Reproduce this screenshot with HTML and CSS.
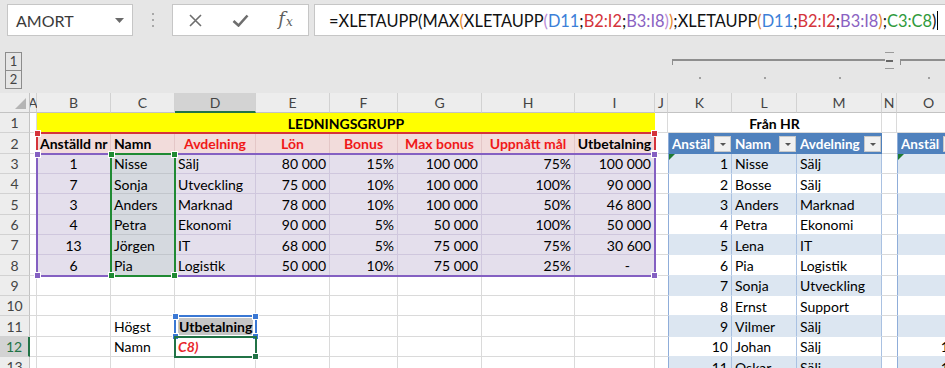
FILE: index.html
```
<!DOCTYPE html>
<html lang="sv">
<head>
    <meta charset="UTF-8">
    <title>XLETAUPP</title>
    <link rel="stylesheet" href="styles.css">
</head>
<body>
    <div class="topbar">
        <div class="namebox">
            <span>AMORT</span>
            <svg width="9" height="5" viewBox="0 0 9 5"><path d="M0 0h9L4.5 5z" fill="#6a6a6a"/></svg>
        </div>
        <div class="grip"><i></i><i></i><i></i></div>
        <div class="fxbtns">
            <span><svg width="13" height="13" viewBox="0 0 13 13"><path d="M1 1l11 11M12 1L1 12" stroke="#6e6e6e" stroke-width="1.6"/></svg></span>
            <span><svg width="17" height="13" viewBox="0 0 17 13"><path d="M1.5 7l5 4.5L15.5 1.5" stroke="#6e6e6e" stroke-width="2.6" fill="none"/></svg></span>
            <span class="fx">f<sub>x</sub></span>
        </div>
        <div class="formula">=XLETAUPP(MAX<b class="f-o">(</b>XLETAUPP<b class="f-l">(</b><b class="f-bl">D11</b>;<b class="f-rd">B2:I2</b>;<b class="f-pu">B3:I8</b><b class="f-l">)</b><b class="f-o">)</b>;XLETAUPP<b class="f-o">(</b><b class="f-bl">D11</b>;<b class="f-rd">B2:I2</b>;<b class="f-pu">B3:I8</b><b class="f-o">)</b>;<b class="f-gr">C3:C8</b>)<span class="caret"></span></div>
    </div>

    <div class="outline">
        <div class="levels"><span>1</span><span>2</span></div>
        <div class="bracket b-km"></div>
        <div class="minus"><i></i></div>
        <div class="bracket b-o"></div>
        <i class="dot" style="grid-column: 12"></i>
        <i class="dot" style="grid-column: 13"></i>
        <i class="dot" style="grid-column: 14"></i>
        <i class="dot" style="grid-column: 16"></i>
    </div>

    <div class="sheet">
        <!-- column headers -->
        <div class="corner"><i></i></div>
        <div class="ch col-a">A</div><div class="ch">B</div><div class="ch">C</div><div class="ch act">D</div>
        <div class="ch">E</div><div class="ch">F</div><div class="ch">G</div><div class="ch">H</div>
        <div class="ch">I</div><div class="ch">J</div><div class="ch">K</div><div class="ch">L</div>
        <div class="ch">M</div><div class="ch">N</div><div class="ch">O</div>

        <!-- 1 -->
        <div class="rh">1</div><div class="c"></div>
        <div class="c title">LEDNINGSGRUPP</div>
        <div class="c"></div>
        <div class="c hr-title">Från HR</div>
        <div class="c"></div><div class="c"></div>

        <!-- 2 -->
        <div class="rh">2</div><div class="c"></div>
        <div class="c hd">Anställd nr</div><div class="c hd">Namn</div>
        <div class="c hd ctr red">Avdelning</div><div class="c hd ctr red">Lön</div>
        <div class="c hd ctr red">Bonus</div><div class="c hd ctr red">Max bonus</div>
        <div class="c hd ctr red">Uppnått mål</div><div class="c hd ctr">Utbetalning</div>
        <div class="c gap"></div>
        <div class="c th first"><span>Anställd nr</span><i class="dd"></i></div>
        <div class="c th"><span>Namn</span><i class="dd"></i></div>
        <div class="c th"><span>Avdelning</span><i class="dd"></i></div>
        <div class="c gap"></div>
        <div class="c th first"><span>Anställd nr</span><i class="dd"></i></div>

        <!-- 3 -->
        <div class="rh">3</div><div class="c"></div>
        <div class="c pu ctr">1</div><div class="c pu sel">Nisse</div><div class="c pu">Sälj</div>
        <div class="c pu num">80 000</div><div class="c pu num">15%</div><div class="c pu num">100 000</div>
        <div class="c pu num">75%</div><div class="c pu num">100 000</div>
        <div class="c gap"></div>
        <div class="c t band first num tri">1</div><div class="c t band">Nisse</div><div class="c t band">Sälj</div>
        <div class="c gap"></div><div class="c t band first tri"></div>

        <!-- 4 -->
        <div class="rh">4</div><div class="c"></div>
        <div class="c pu ctr">7</div><div class="c pu sel">Sonja</div><div class="c pu">Utveckling</div>
        <div class="c pu num">75 000</div><div class="c pu num">10%</div><div class="c pu num">100 000</div>
        <div class="c pu num">100%</div><div class="c pu num">90 000</div>
        <div class="c gap"></div>
        <div class="c t first num">2</div><div class="c t">Bosse</div><div class="c t">Sälj</div>
        <div class="c gap"></div><div class="c t first"></div>

        <!-- 5 -->
        <div class="rh">5</div><div class="c"></div>
        <div class="c pu ctr">3</div><div class="c pu sel">Anders</div><div class="c pu">Marknad</div>
        <div class="c pu num">78 000</div><div class="c pu num">10%</div><div class="c pu num">100 000</div>
        <div class="c pu num">50%</div><div class="c pu num">46 800</div>
        <div class="c gap"></div>
        <div class="c t band first num">3</div><div class="c t band">Anders</div><div class="c t band">Marknad</div>
        <div class="c gap"></div><div class="c t band first"></div>

        <!-- 6 -->
        <div class="rh">6</div><div class="c"></div>
        <div class="c pu ctr">4</div><div class="c pu sel">Petra</div><div class="c pu">Ekonomi</div>
        <div class="c pu num">90 000</div><div class="c pu num">5%</div><div class="c pu num">50 000</div>
        <div class="c pu num">100%</div><div class="c pu num">50 000</div>
        <div class="c gap"></div>
        <div class="c t first num">4</div><div class="c t">Petra</div><div class="c t">Ekonomi</div>
        <div class="c gap"></div><div class="c t first"></div>

        <!-- 7 -->
        <div class="rh">7</div><div class="c"></div>
        <div class="c pu ctr">13</div><div class="c pu sel">Jörgen</div><div class="c pu">IT</div>
        <div class="c pu num">68 000</div><div class="c pu num">5%</div><div class="c pu num">75 000</div>
        <div class="c pu num">75%</div><div class="c pu num">30 600</div>
        <div class="c gap"></div>
        <div class="c t band first num">5</div><div class="c t band">Lena</div><div class="c t band">IT</div>
        <div class="c gap"></div><div class="c t band first"></div>

        <!-- 8 -->
        <div class="rh">8</div><div class="c"></div>
        <div class="c pu ctr">6</div><div class="c pu sel">Pia</div><div class="c pu">Logistik</div>
        <div class="c pu num">50 000</div><div class="c pu num">10%</div><div class="c pu num">75 000</div>
        <div class="c pu num">25%</div><div class="c pu num dash">-</div>
        <div class="c gap"></div>
        <div class="c t first num">6</div><div class="c t">Pia</div><div class="c t">Logistik</div>
        <div class="c gap"></div><div class="c t first"></div>

        <!-- 9 -->
        <div class="rh">9</div><div class="c"></div>
        <div class="c"></div><div class="c"></div><div class="c"></div><div class="c"></div>
        <div class="c"></div><div class="c"></div><div class="c"></div><div class="c"></div>
        <div class="c gap"></div>
        <div class="c t band first num">7</div><div class="c t band">Sonja</div><div class="c t band">Utveckling</div>
        <div class="c gap"></div><div class="c t band first"></div>

        <!-- 10 -->
        <div class="rh">10</div><div class="c"></div>
        <div class="c"></div><div class="c"></div><div class="c"></div><div class="c"></div>
        <div class="c"></div><div class="c"></div><div class="c"></div><div class="c"></div>
        <div class="c gap"></div>
        <div class="c t first num">8</div><div class="c t">Ernst</div><div class="c t">Support</div>
        <div class="c gap"></div><div class="c t first"></div>

        <!-- 11 -->
        <div class="rh">11</div><div class="c"></div>
        <div class="c"></div><div class="c">Högst</div><div class="c"><span class="hl">Utbetalning</span></div><div class="c"></div>
        <div class="c"></div><div class="c"></div><div class="c"></div><div class="c"></div>
        <div class="c gap"></div>
        <div class="c t band first num">9</div><div class="c t band">Vilmer</div><div class="c t band">Sälj</div>
        <div class="c gap"></div><div class="c t band first"></div>

        <!-- 12 -->
        <div class="rh act">12</div><div class="c"></div>
        <div class="c"></div><div class="c">Namn</div><div class="c edit">C8)</div><div class="c"></div>
        <div class="c"></div><div class="c"></div><div class="c"></div><div class="c"></div>
        <div class="c gap"></div>
        <div class="c t first num">10</div><div class="c t">Johan</div><div class="c t">Sälj</div>
        <div class="c gap"></div><div class="c t first num">10</div>

        <!-- 13 -->
        <div class="rh">13</div><div class="c"></div>
        <div class="c"></div><div class="c"></div><div class="c"></div><div class="c"></div>
        <div class="c"></div><div class="c"></div><div class="c"></div><div class="c"></div>
        <div class="c gap"></div>
        <div class="c t band first num">11</div><div class="c t band">Oskar</div><div class="c t band">Sälj</div>
        <div class="c gap"></div><div class="c t band first num">11</div>

        <!-- range finder marks over the cells -->
        <div class="marks">
            <div class="rng red-rng"><i class="tl"></i><i class="tr"></i><i class="bl"></i><i class="br"></i></div>
            <div class="rng pu-rng"><i class="tl"></i><i class="tr"></i><i class="bl"></i><i class="br"></i></div>
            <div class="rng gr-rng"><i class="tl"></i><i class="tr"></i><i class="bl"></i><i class="br"></i></div>
            <div class="rng bl-rng"><i class="tl"></i><i class="tr"></i><i class="bl"></i><i class="br"></i></div>
            <div class="active"><i class="br"></i></div>
        </div>
    </div>
</body>
</html>
```

FILE: styles.css
```
* {
    margin: 0;
    padding: 0;
    box-sizing: border-box;
}

body {
    width: 945px;
    height: 368px;
    overflow: hidden;
    background: #e6e6e6;
    font-family: Lato, 'Liberation Sans', sans-serif;
    color: #000;
}

/* formula bar */
.topbar {
    height: 40px;
    display: flex;
    align-items: center;
    padding-left: 7px;
    white-space: nowrap;
}

.namebox {
    flex: none;
    width: 126px;
    height: 32px;
    background: #fff;
    border: 1px solid #c6c6c6;
    display: flex;
    align-items: center;
    justify-content: space-between;
    padding: 0 8px 0 8px;
    font-size: 16px;
    color: #3a3a3a;
}

.grip {
    flex: none;
    width: 39px;
    display: flex;
    flex-direction: column;
    align-items: center;
    gap: 4px;
}

.grip i {
    width: 2px;
    height: 2px;
    background: #a8a8a8;
}

.fxbtns {
    flex: none;
    width: 137px;
    height: 32px;
    background: #fff;
    border: 1px solid #c6c6c6;
    display: flex;
    align-items: center;
}

.fxbtns span {
    flex: 1;
    display: flex;
    justify-content: center;
    align-items: center;
}

.fx {
    font-family: 'DejaVu Serif', serif;
    font-style: italic;
    font-size: 18px;
    color: #5f5f5f;
    padding-bottom: 4px;
}

.fx sub {
    font-size: 12px;
    position: relative;
    top: 4px;
    margin-left: 1px;
}

.formula {
    margin-left: 5px;
    flex: none;
    width: 640px;
    height: 32px;
    background: #fff;
    border: 1px solid #c6c6c6;
    padding-left: 14px;
    display: flex;
    align-items: center;
    font-size: 16.4px;
    color: #111;
}

.formula b { font-weight: normal; }
.f-o { color: #e5862c; }
.f-l { color: #b98ad6; }
.f-bl { color: #3c7fd8; }
.f-rd { color: #d4343b; }
.f-pu { color: #8a62c2; }
.f-gr { color: #2f9a3c; }

.caret {
    width: 1px;
    height: 19px;
    background: #000;
    margin-left: 1px;
}

/* shared column layout */
.outline, .sheet {
    display: grid;
    grid-template-columns: 30px 7px 74px 64px 81px 74px 68px 84px 93px 80px 13px 64px 65px 85px 15px 64px;
}

/* grouping area */
.outline {
    height: 53px;
    grid-template-rows: 53px;
}

.levels {
    grid-column: 1;
    grid-row: 1;
    margin: 12px 0 0 5px;
    width: 17px;
    align-self: start;
}

.levels span {
    display: block;
    height: 19px;
    border: 1px solid #8c8c8c;
    margin-bottom: -1px;
    font-size: 13px;
    color: #444;
    text-align: center;
    line-height: 17px;
}

.bracket {
    grid-row: 1;
    align-self: start;
    margin-top: 19px;
    height: 6px;
    border-top: 2px solid #8e8e8e;
    border-left: 1px solid #8e8e8e;
}

.b-km {
    grid-column: 12 / 15;
    margin-left: 4px;
    margin-right: -3px;
}

.b-o {
    grid-column: 16;
    margin-left: 3px;
}

.minus {
    grid-column: 15;
    grid-row: 1;
    align-self: start;
    justify-self: center;
    margin-top: 12px;
    width: 9px;
    height: 17px;
    border-top: 1px solid #9a9a9a;
    border-bottom: 1px solid #9a9a9a;
    display: flex;
    align-items: center;
    justify-content: center;
}

.minus i {
    width: 7px;
    height: 2px;
    background: #666;
}

.dot {
    grid-row: 1;
    align-self: start;
    justify-self: center;
    margin-top: 37px;
    width: 2px;
    height: 2px;
    background: #a0a0a0;
}

/* sheet */
.sheet {
    position: relative;
    grid-template-rows: 20px repeat(13, 20.35px);
    background: #fff;
    font-size: 14px;
}

.corner, .ch, .rh {
    background: #ededed;
    color: #444;
    display: flex;
    align-items: center;
    justify-content: center;
    font-size: 14px;
}

.corner {
    border-right: 1px solid #c3c3c3;
    border-bottom: 1px solid #c3c3c3;
    position: relative;
}

.corner i {
    position: absolute;
    right: 3px;
    bottom: 3px;
    border-style: solid;
    border-width: 0 0 11px 11px;
    border-color: transparent transparent #b5b5b5 transparent;
}

.ch {
    border-right: 1px solid #d2d2d2;
    border-bottom: 1px solid #c3c3c3;
}

.col-a {
    overflow: visible;
}

.ch.act {
    background: #d3d3d3;
    border-bottom: 2px solid #217346;
}

.rh {
    border-right: 1px solid #c3c3c3;
    border-bottom: 1px solid #d2d2d2;
}

.rh.act {
    background: #d3d3d3;
    border-right: 2px solid #217346;
    color: #217346;
}

.c {
    border-right: 1px solid #dadada;
    border-bottom: 1px solid #dadada;
    padding: 1px 3px 0;
    display: flex;
    align-items: center;
    white-space: nowrap;
    overflow: hidden;
    position: relative;
}

.ctr { justify-content: center; }
.num { justify-content: flex-end; }
.dash { padding-right: 24px; }

.title {
    grid-column: span 8;
    background: #ffff00;
    justify-content: center;
    font-weight: bold;
    border-right: none;
}

.hr-title {
    grid-column: span 3;
    justify-content: center;
    font-weight: bold;
}

.hd {
    background: #f2dcdb;
    font-weight: bold;
    border-color: #e4c7c7;
}

.red { color: #f01818; }

.pu {
    background: #e4dfec;
    border-color: #cfc7dd;
}

.pu.sel {
    background: #d5d9df;
    border-color: #c2c6cc;
}

.gap { border-right: none; }

/* excel table on the right */
.t {
    border-right: 1px solid #a9c1e2;
    border-bottom: 1px solid #dce6f1;
}

.t.band { background: #dce6f1; }

.first { border-left: 1px solid #8fadd9; }

.tri::before {
    content: '';
    position: absolute;
    left: 0;
    top: 0;
    border-style: solid;
    border-width: 6px 6px 0 0;
    border-color: #1e7a34 transparent transparent transparent;
}

.th {
    background: #4f81bd;
    color: #fff;
    font-weight: bold;
    font-size: 13.5px;
    border-right: none;
    border-bottom: 1px solid #4f81bd;
    padding-right: 1px;
    gap: 2px;
}

.th span {
    flex: 1;
    overflow: hidden;
}

.th.first span {
    flex: none;
    width: 39px;
    margin-right: auto;
}

.dd {
    flex: none;
    width: 17px;
    height: 16px;
    background: #f1f1f1;
    border: 1px solid #c9c9c9;
    position: relative;
}

.dd::after {
    content: '';
    position: absolute;
    left: 5px;
    top: 6px;
    border-style: solid;
    border-width: 3px 3px 0 3px;
    border-color: #555 transparent transparent transparent;
}

.hl {
    background: #c5c5c5;
    font-weight: bold;
    padding: 0 1px;
}

.edit {
    color: #e8262b;
    font-weight: bold;
    font-style: italic;
}

/* range finder overlays */
.marks {
    position: absolute;
    inset: 0;
    display: grid;
    grid-template-columns: inherit;
    grid-template-rows: inherit;
    pointer-events: none;
}

.rng, .active {
    position: relative;
    margin: -1px;
    border: 2px solid;
}

.rng i, .active i {
    position: absolute;
    width: 7px;
    height: 7px;
    background: currentColor;
    border: 1px solid #fff;
}

.tl { left: -4px; top: -4px; }
.tr { right: -4px; top: -4px; }
.bl { left: -4px; bottom: -4px; }
.br { right: -4px; bottom: -4px; }

.red-rng {
    grid-column: 3 / 11;
    grid-row: 3 / 4;
    color: #d5343b;
}

.pu-rng {
    grid-column: 3 / 11;
    grid-row: 4 / 10;
    color: #8460c2;
}

.gr-rng {
    grid-column: 4 / 5;
    grid-row: 4 / 10;
    color: #1f8a33;
}

.bl-rng {
    grid-column: 5 / 6;
    grid-row: 12 / 13;
    color: #3a78d4;
}

.active {
    grid-column: 5 / 6;
    grid-row: 13 / 14;
    color: #217346;
}
```
